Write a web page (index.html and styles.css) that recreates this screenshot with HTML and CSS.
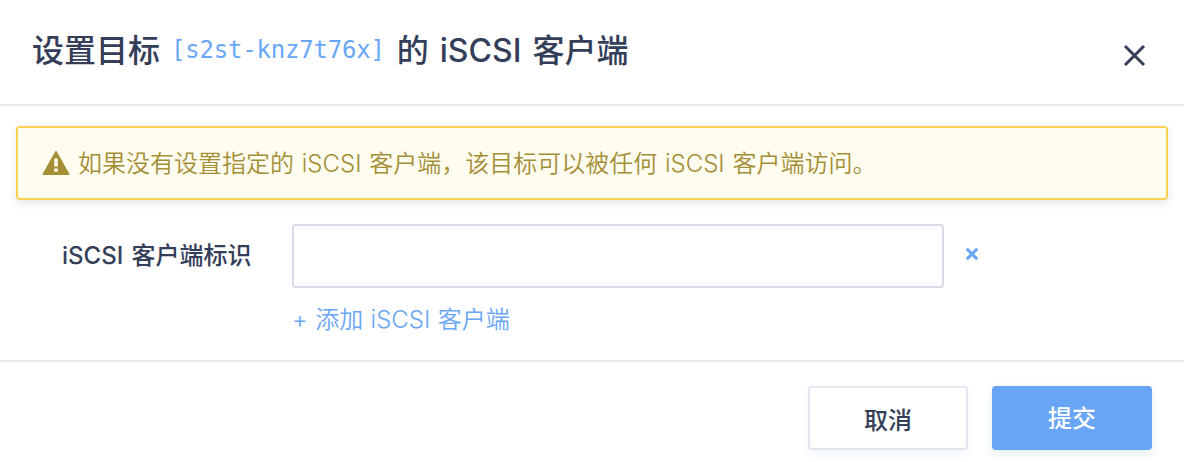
FILE: index.html
```html
<!DOCTYPE html>
<html lang="zh-CN">
<head>
<meta charset="utf-8">
<title>iSCSI</title>
<link rel="stylesheet" href="styles.css">
</head>
<body>
<div class="modal">
  <header class="head">
    <h1 class="title"><span class="t1">设置目标</span><code class="target">[s2st-knz7t76x]</code><span class="t2">的 iSCSI 客户端</span></h1>
    <svg class="close" viewBox="0 0 24 24"><path d="M3 3 22 22M22 3 3 22"/></svg>
  </header>
  <main class="body">
    <div class="alert">
      <svg class="warn" viewBox="0 0 28 26"><path fill-rule="evenodd" d="M13.2 1.5Q14 .2 14.8 1.5L27.2 23.4Q27.8 25 26.5 25H1.5Q.2 25 .8 23.4ZM12.2 8.5V16.5H15.8V8.5ZM12.2 18.5V21.8H15.8V18.5Z"/></svg>
      <span class="alert-text">如果没有设置指定的 iSCSI 客户端，该目标可以被任何 iSCSI 客户端访问。</span>
    </div>
    <div class="form">
      <label class="label"><span>iSCSI 客户端标识</span></label>
      <div class="field">
        <div class="row"><input class="input" type="text"><svg class="remove" viewBox="0 0 12 12"><path d="M1.5 1.5 10.5 10.5M10.5 1.5 1.5 10.5"/></svg></div>
        <a class="add">+ 添加 iSCSI 客户端</a>
      </div>
    </div>
  </main>
  <footer class="foot">
    <button class="btn"><span>取消</span></button>
    <button class="btn primary"><span>提交</span></button>
  </footer>
</div>
</body>
</html>
```
FILE: styles.css
```css
* { box-sizing: border-box; }
body { margin: 0; background: #fff; color: #343e58; font-family: Inter, "Noto Sans CJK SC", sans-serif; font-size: 24px; }
.modal { width: 1184px; height: 462px; display: flex; flex-direction: column; }
.head { height: 106px; border-bottom: 2px solid #e5e9ee; padding: 0 38px 0 32px; display: flex; justify-content: space-between; align-items: flex-start; }
.title { margin: 0; padding-top: 27px; display: flex; align-items: center; font-size: 32px; line-height: 48px; font-weight: 500; word-spacing: 2.5px; white-space: nowrap; }
.target { margin: -2px 12px 0 11px; font: 24px/48px "DejaVu Sans Mono", monospace; letter-spacing: -.2px; color: #6ba7f8; }
.close { width: 24px; height: 24px; margin-top: 43px; fill: none; stroke: #343e58; stroke-width: 3; }
.body { height: 256px; padding: 20px 16px 0; border-bottom: 2px solid #e5e9ee; }
.alert { height: 74px; border: 2px solid #f8d154; border-radius: 4px; background: #fffdf0; color: #a48e36; padding-left: 24px; display: flex; align-items: center; box-shadow: 0 3px 10px rgba(0,0,0,.1); white-space: nowrap; }
.alert-text { padding-bottom: 3px; font-weight: 350; word-spacing: 1px; }
.warn { width: 28px; height: 26px; margin-right: 8px; fill: currentColor; }
.form { display: flex; margin-top: 24px; }
.label { width: 276px; padding-left: 46px; line-height: 64px; font-weight: 500; word-spacing: 2px; white-space: nowrap; }
.row { display: flex; align-items: center; }
.input { width: 652px; height: 64px; border: 2px solid #d7dce6; border-radius: 4px; padding: 0 16px; font: inherit; background: #fff; }
.remove { width: 14px; height: 14px; margin: -4px 0 0 21px; fill: none; stroke: #6aa6f8; stroke-width: 2.7; }
.add { display: inline-block; margin-top: 14px; line-height: 36px; font-weight: 350; color: #6aa6f8; word-spacing: .7px; white-space: nowrap; }
.foot { height: 100px; padding: 24px 32px 0; display: flex; justify-content: flex-end; gap: 24px; }
.btn { width: 160px; height: 64px; border: 2px solid #e1e5ee; border-radius: 4px; padding: 0; background: #fff; color: #343e58; font: 500 24px Inter, "Noto Sans CJK SC", sans-serif; box-shadow: 0 3px 8px rgba(30,60,100,.06); }
.primary { background: #69a5f7; border-color: #69a5f7; color: #fff; padding-bottom: 4px; box-shadow: 0 3px 8px rgba(40,150,90,.16); }
```
